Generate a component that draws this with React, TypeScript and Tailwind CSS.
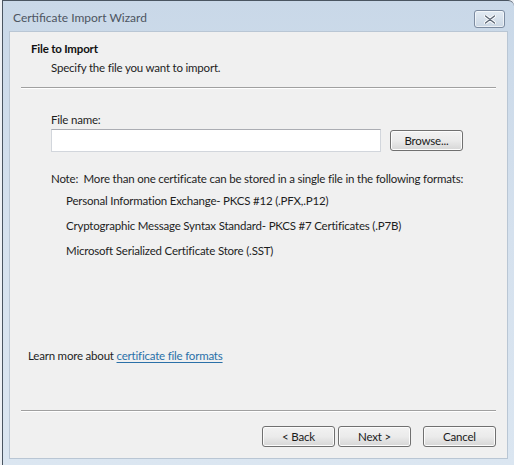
import React from "react";

/* ── Small Win7-style push button ─────────────────────────────────────── */
function WinButton({ children, className = "" }: { children: React.ReactNode; className?: string }) {
  return (
    <button
      className={
        "h-[21px] rounded-[3px] border border-[#707070] bg-gradient-to-b from-[#f2f2f2] via-[#ebebeb] to-[#d6d6d6] text-[11.5px] tracking-[-0.2px] text-[#1a1a1a] leading-none shadow-[inset_0_0_0_1px_#fcfcfc] " +
        className
      }
    >
      {children}
    </button>
  );
}

export default function App() {
  const formats = [
    "Personal Information Exchange- PKCS #12 (.PFX,.P12)",
    "Cryptographic Message Syntax Standard- PKCS #7 Certificates (.P7B)",
    "Microsoft Serialized Certificate Store (.SST)",
  ];

  return (
    <div
      className="w-[514px] h-[465px] bg-[#eef1f5] pl-[2px] overflow-hidden"
      style={{ fontFamily: 'Lato, "Liberation Sans", sans-serif' }}
    >
      {/* Window frame */}
      <div className="h-full flex flex-col border-l border-t border-[#4a5561] rounded-tr-[6px] bg-gradient-to-b from-[#c9d8e8] via-[#d5e1ee] to-[#dbe6f1]">
        {/* Title bar */}
        <div className="h-[30px] flex items-center justify-between pl-[10px] pr-[9px] shrink-0">
          <span className="text-[12px] text-[#4d5561] mt-[4px]">Certificate Import Wizard</span>
          <div className="w-[31px] h-[18px] mt-[6px] rounded-[3px] border border-[#7c8ba0] bg-gradient-to-b from-[#e3ebf3] to-[#cbd7e4] flex items-center justify-center shadow-[inset_0_0_0_1px_rgba(255,255,255,0.6)]">
            <svg width="12" height="9" viewBox="0 0 12 9">
              <path d="M1.5 1 L10.5 8 M10.5 1 L1.5 8" stroke="#ffffff" strokeWidth="3.2" strokeLinecap="round" />
              <path d="M1.5 1 L10.5 8 M10.5 1 L1.5 8" stroke="#5d6877" strokeWidth="1.4" strokeLinecap="round" />
            </svg>
          </div>
        </div>

        {/* Client area */}
        <div className="flex-1 mx-[6px] mb-[6px] border border-[#b9c6d4] bg-[#f0f0f0] flex flex-col text-[11.5px] tracking-[-0.2px] text-[#1e1e1e] whitespace-nowrap">
          {/* Header */}
          <div className="pt-[9px] pl-[21px]">
            <div className="font-bold text-[#111] leading-[16px]">File to Import</div>
            <div className="pl-[20px] mt-[3px] leading-[16px]">Specify the file you want to import.</div>
          </div>
          <div className="mx-[11px] mt-[11px] border-t border-[#a0a0a0] border-b border-b-white" />

          {/* Body */}
          <div className="pl-[41px] pr-[30px] pt-[23px]">
            <div className="leading-[16px]">File name:</div>
            <div className="flex items-center mt-[1px]">
              <div className="w-[330px] h-[23px] border border-[#d2d6dc] border-t-[#abadb3] bg-white" />
              <WinButton className="w-[73px] ml-[9px]">Browse...</WinButton>
            </div>
            <div className="mt-[19px] leading-[16px]">
              Note:&nbsp; More than one certificate can be stored in a single file in the following formats:
            </div>
            <div className="pl-[15px] mt-[6px] flex flex-col gap-[9px]">
              {formats.map((f) => (
                <div key={f} className="leading-[16px]">{f}</div>
              ))}
            </div>
          </div>

          <div className="flex-1" />

          {/* Learn more */}
          <div className="pl-[18px] leading-[16px]">
            Learn more about{" "}
            <a className="text-[#2a70a8] underline underline-offset-[2px]">certificate file formats</a>
          </div>

          <div className="mx-[11px] mt-[46px] border-t border-[#a0a0a0] border-b border-b-white" />

          {/* Footer buttons */}
          <div className="flex justify-end pr-[11px] pt-[14px] pb-[11px]">
            <WinButton className="w-[73px]">&lt; Back</WinButton>
            <WinButton className="w-[73px] ml-[3px]">Next &gt;</WinButton>
            <WinButton className="w-[73px] ml-[12px]">Cancel</WinButton>
          </div>
        </div>
      </div>
    </div>
  );
}
